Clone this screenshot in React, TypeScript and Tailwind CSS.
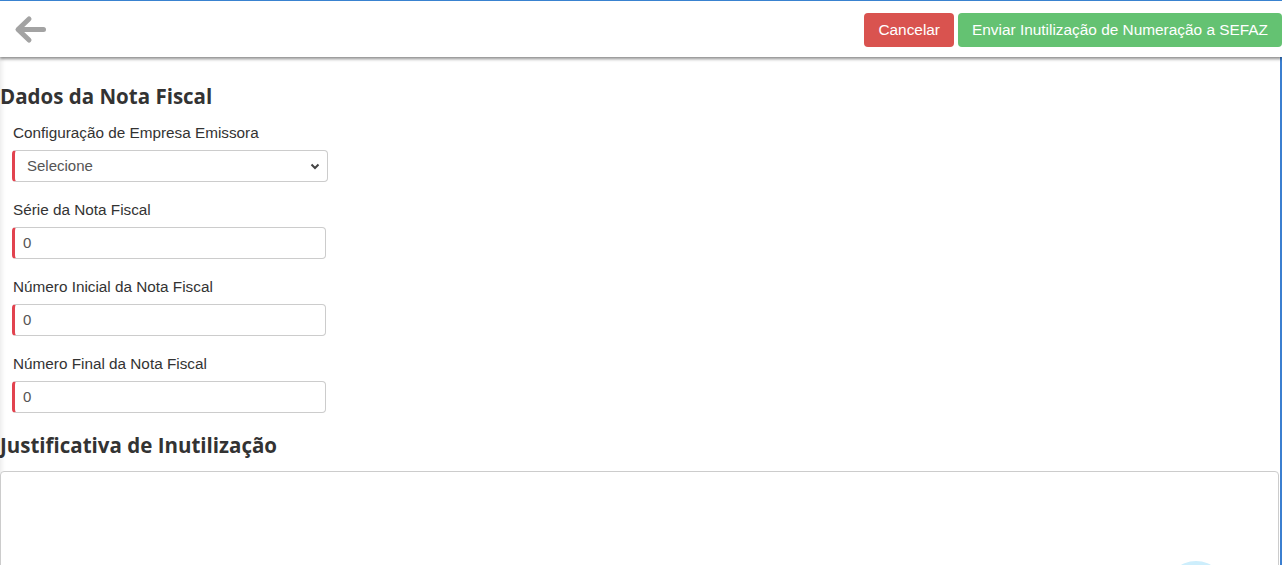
import React from "react";

const labelCls =
  "block h-[20px] leading-[20px] text-[15.3px] text-[#333] mb-[7px] pl-[13px]";

function Field({ label, value }: { label: string; value: string }) {
  return (
    <div className="mb-[18px]">
      <label className={labelCls}>{label}</label>
      <div className="ml-[12px] w-[314px] h-[32px] border border-[#ccc] border-l-[3px] border-l-[#e2434f] rounded-[4px] bg-white flex items-center pl-[8px] text-[15px] text-[#555]">
        {value}
      </div>
    </div>
  );
}

export default function App() {
  return (
    <div
      className="relative w-[1282px] h-[565px] overflow-hidden bg-white"
      style={{ fontFamily: '"Liberation Sans", Arial, sans-serif' }}
    >
      <div className="h-[1px] bg-[#3b86d6]" />
      <header className="relative z-10 h-[56px] bg-white flex items-center justify-between shadow-[0_2px_3px_rgba(0,0,0,0.45)]">
        <div className="pl-[14px] pt-[1px]">
          <svg width="32" height="30" viewBox="0 0 32 30" fill="none">
            <path
              d="M15 4 L4 14.5 L15 25"
              stroke="#a3a3a3"
              strokeWidth="5"
              strokeLinecap="round"
              strokeLinejoin="round"
            />
            <path d="M5 14.5 H29.5" stroke="#a3a3a3" strokeWidth="5" strokeLinecap="round" />
          </svg>
        </div>
        <div className="flex items-center gap-[4px] pt-[2px]">
          <button className="h-[34px] px-[14px] rounded-[4px] bg-[#d9534f] text-white text-[15.4px]">
            Cancelar
          </button>
          <button className="h-[34px] w-[324px] pl-[14px] text-left rounded-[4px] bg-[#64c272] text-white text-[15.4px]">
            Enviar Inutilização de Numeração a SEFAZ
          </button>
        </div>
      </header>
      <main className="relative h-[508px] border-r-2 border-[#3b7fd0] shadow-[inset_5px_0_4px_-3px_rgba(0,0,0,0.08)]">
        <h2
          className="pt-[25px] h-[53px] leading-[28px] text-[20.5px] font-bold text-[#333]"
          style={{ fontFamily: '"Open Sans", sans-serif' }}
        >
          Dados da Nota Fiscal
        </h2>
        <div className="mt-[13px]">
          <div className="mb-[18px]">
            <label className={labelCls}>Configuração de Empresa Emissora</label>
            <div className="ml-[12px] w-[316px] h-[32px] border border-[#ccc] border-l-[3px] border-l-[#e2434f] rounded-[4px] bg-white flex items-center justify-between pl-[12px] pr-[6px] text-[15px] text-[#555]">
              <span>Selecione</span>
              <svg width="12" height="12" viewBox="0 0 12 12" fill="none">
                <path d="M2.5 4.5 L6 8 L9.5 4.5" stroke="#444" strokeWidth="2" />
              </svg>
            </div>
          </div>
          <Field label="Série da Nota Fiscal" value="0" />
          <Field label="Número Inicial da Nota Fiscal" value="0" />
          <Field label="Número Final da Nota Fiscal" value="0" />
        </div>
        <h2
          className="mt-[1px] h-[28px] leading-[28px] text-[20.5px] font-bold text-[#333]"
          style={{ fontFamily: '"Open Sans", sans-serif' }}
        >
          Justificativa de Inutilização
        </h2>
        <div className="mt-[12px] w-[1279px] h-[150px] border border-[#ccc] rounded-[4px] bg-white" />
        <div className="absolute left-[1166px] top-[504px] w-[60px] h-[60px] rounded-full bg-[#cdeefc]" />
      </main>
    </div>
  );
}
